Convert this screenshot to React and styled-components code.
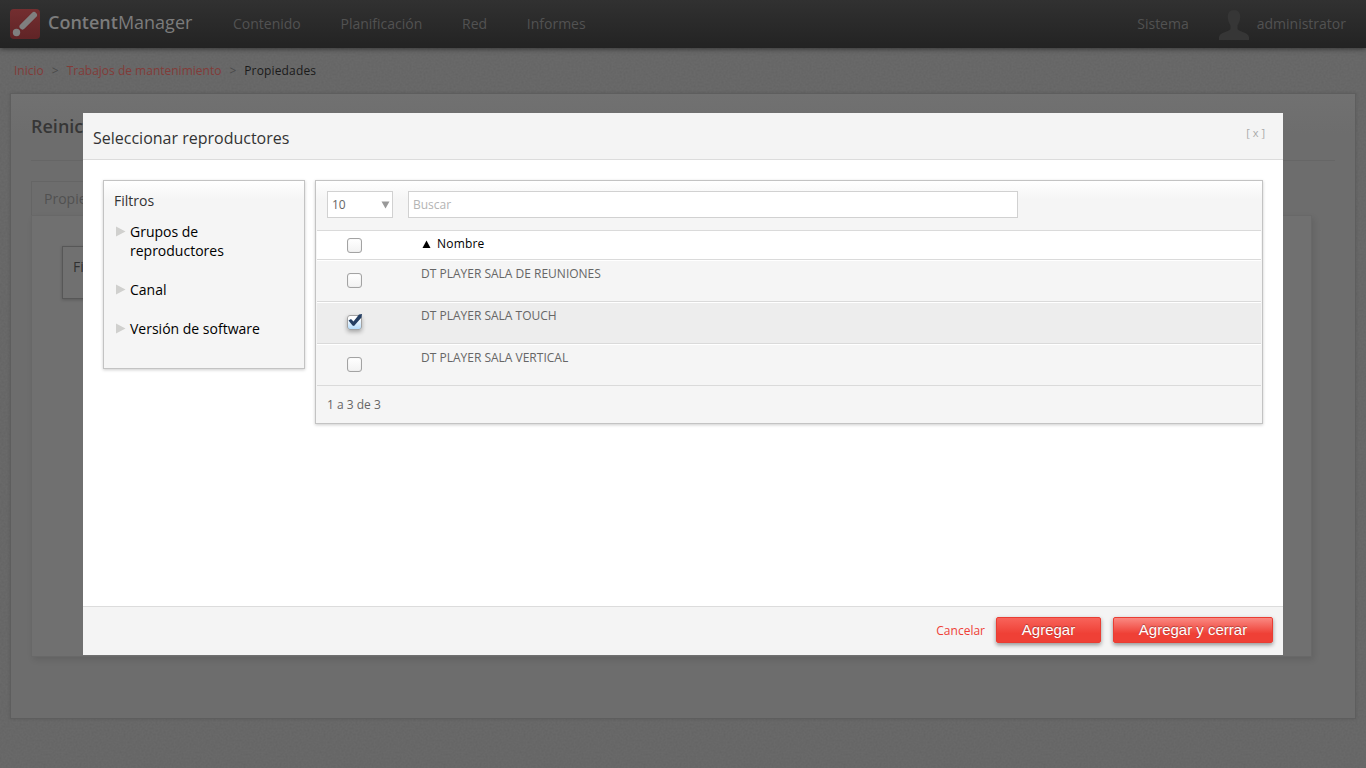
import React, { Component } from 'react';
import styled, { createGlobalStyle } from 'styled-components'

const noise = "data:image/svg+xml,%3Csvg xmlns='http://www.w3.org/2000/svg' width='200' height='200'%3E%3Cfilter id='n'%3E%3CfeTurbulence type='fractalNoise' baseFrequency='.5' numOctaves='2' stitchTiles='stitch'/%3E%3CfeColorMatrix values='0 0 0 0 0 0 0 0 0 0 0 0 0 0 0 .09 0 0 0 -.03'/%3E%3C/filter%3E%3Crect width='200' height='200' filter='url(%23n)'/%3E%3C/svg%3E"

const GlobalStyle = createGlobalStyle`
    * {
        box-sizing: border-box;
    }
    body {
        margin: 0;
        overflow: hidden;
        font-family: "Open Sans", sans-serif;
        font-size: 12px;
        color: #666;
    }
`

const Page = styled.div`
    height: 768px;
    background: #696969 url("${noise}");
`

const Header = styled.header`
    position: relative;
    display: flex;
    align-items: center;
    height: 48px;
    padding: 0 20px 0 10px;
    background: linear-gradient(#313131, #232323);
    box-shadow: 0 1px 5px rgba(0, 0, 0, .5);
`
const Brand = styled.div`
    width: 185px;
    margin: -5px 0 0 8px;
    font-size: 18px;
    line-height: 26px;
    color: #7c7c7c;
    b {
        font-weight: 600;
    }
`
const Nav = styled.nav`
    display: flex;
    flex: 1;
    gap: 39.7px;
`
const NavItem = styled.a`
    font-size: 14px;
    line-height: 20px;
    color: #525252;
`
const UserIcon = styled.svg`
    margin: 2px 8px 0 30px;
`

const Breadcrumb = styled.div`
    display: flex;
    gap: 8px;
    height: 45px;
    padding: 14px 14px 0;
    line-height: 17px;
    color: #4a4a4a;
`
const Crumb = styled.span`
    color: ${props => props.$current ? '#1a1a1a' : '#823b38'};
    letter-spacing: ${props => props.$current ? '.15px' : 'normal'};
`

const Main = styled.main`
    width: 1346px;
    height: 626px;
    margin-left: 10px;
    padding: 0 20px;
    border: 1px solid #5e5e5e;
    background: linear-gradient(#717171, #6d6d6d 40px);
    box-shadow: 0 0 3px rgba(0, 0, 0, .12);
`
const PageTitle = styled.h1`
    height: 67px;
    margin: 0 0 20px;
    padding-top: 20px;
    border-bottom: 1px solid #666;
    font-size: 18px;
    font-weight: 600;
    line-height: 25px;
    color: #363636;
`
const Tab = styled.div`
    width: 120px;
    height: 34px;
    padding: 7px 12px;
    border: 1px solid #656565;
    border-bottom: 0;
    font-size: 14px;
    line-height: 19px;
    color: #515151;
`
const TabContent = styled.div`
    width: 1281px;
    height: 442px;
    padding: 30px;
    border: 1px solid #686868;
    background: #707070;
    box-shadow: 2px 3px 6px rgba(0, 0, 0, .1);
`
const PageFilter = styled.div`
    width: 202px;
    height: 53px;
    padding: 10px;
    border: 1px solid #575757;
    box-shadow: 0 1px 3px rgba(0, 0, 0, .2);
    font-size: 14px;
    line-height: 20px;
    color: #303030;
`

const Overlay = styled.div`
    position: fixed;
    inset: 0;
    display: flex;
    align-items: center;
    justify-content: center;
`
const Modal = styled.section`
    display: flex;
    flex-direction: column;
    width: 1200px;
    height: 542px;
    background: #fff;
`
const ModalHeader = styled.div`
    display: flex;
    justify-content: space-between;
    height: 47px;
    padding: 14px 18px 0 10px;
    border-bottom: 1px solid #dcdcdc;
    background: #f4f4f4;
`
const ModalTitle = styled.h2`
    margin: 0;
    font-size: 16px;
    font-weight: normal;
    line-height: 22px;
    color: #333;
`
const Close = styled.a`
    margin-top: -1px;
    font-size: 11px;
    line-height: 13px;
    color: #aaa;
`
const ModalBody = styled.div`
    display: flex;
    flex: 1;
    align-items: flex-start;
    gap: 10px;
    padding: 20px;
`
const ModalFooter = styled.div`
    display: flex;
    justify-content: flex-end;
    height: 49px;
    padding: 10px 10px 0;
    border-top: 1px solid #dcdcdc;
    background: #f4f4f4;
`
const Cancel = styled.a`
    margin-right: 11px;
    line-height: 28px;
    color: #ef4036;
`
const Button = styled.button`
    width: ${props => props.$width}px;
    height: 26px;
    margin-left: ${props => props.$hover ? 12 : 0}px;
    padding: 0;
    border: 1px solid #e93d33;
    border-radius: 2px;
    background: linear-gradient(${props => props.$hover ? '#fa8982' : '#f8635a'}, #ef4036 65%);
    box-shadow: 0 2px 4px rgba(0, 0, 0, .4);
    font-family: "Liberation Sans", sans-serif;
    font-size: 15px;
    line-height: 24px;
    color: #fff;
    text-shadow: 0 -1px 1px rgba(0, 0, 0, .3);
`

const Panel = styled.div`
    border: 1px solid #c3c3c3;
    background: linear-gradient(#fff, #f5f5f5 18px);
    box-shadow: 0 1px 3px rgba(0, 0, 0, .2);
`
const FilterPanel = styled(Panel)`
    width: 202px;
    height: 189px;
    padding: 10px;
`
const FilterTitle = styled.div`
    margin-bottom: 11px;
    font-size: 14px;
    line-height: 20px;
    color: #333;
`
const FilterItem = styled.div`
    display: flex;
    align-items: flex-start;
    margin-bottom: 20px;
    padding-left: 2px;
    font-size: 14px;
    line-height: 19px;
    color: #000;
    svg {
        flex: none;
        margin: 4px 4px 0 0;
    }
`

const ListPanel = styled(Panel)`
    flex: 1;
    height: 244px;
    padding: 0 1px;
`
const Toolbar = styled.div`
    display: flex;
    gap: 15px;
    height: 49px;
    padding: 10px;
`
const PageSize = styled.div`
    display: flex;
    align-items: center;
    justify-content: space-between;
    width: 66px;
    height: 27px;
    padding: 0 2px 0 4px;
    border: 1px solid #d1d1d1;
    background: #fff;
`
const Search = styled.input`
    width: 610px;
    height: 27px;
    padding: 0 4px;
    border: 1px solid #d1d1d1;
    outline: none;
    font: 12px "Open Sans", sans-serif;
    &::placeholder {
        color: #b4b4b4;
    }
`
const Row = styled.div`
    display: flex;
    height: 42px;
    padding: 4px 0 0 30px;
    border-top: 1px solid #fff;
    border-bottom: 1px solid #dadada;
    background: ${props => props.$selected ? '#ededed' : 'transparent'};
    line-height: 17px;
`
const HeadRow = styled(Row)`
    height: 30px;
    border-top-color: #dadada;
    background: #fff;
    color: #000;
    letter-spacing: .2px;
    svg {
        margin: 0 6px 0 1px;
    }
`
const CheckBox = styled.span`
    width: 15px;
    height: 15px;
    margin: ${props => props.$head ? 3 : 8}px 59px 0 0;
    border: 1px solid #a3a3a3;
    border-radius: 3px;
    background: ${props => props.$checked ? 'linear-gradient(#fff 20%, #b4dbfa)' : 'linear-gradient(#fff, #f2f2f2)'};
    box-shadow: ${props => props.$checked ? '0 2px 4px rgba(0, 0, 0, .3)' : 'inset 0 0 1px #ccc'};
    svg {
        display: block;
        margin: -3px 0 0 -1px;
        overflow: visible;
    }
`
const Summary = styled.div`
    padding: 10px;
    line-height: 17px;
`

const Arrow = () => (
    <svg width="10" height="11"><path d="M0 0.5L9.5 5.5L0 10.5z" fill="#d0d0ce"/></svg>
)

class App extends Component {
    state = {
        filters: ['Grupos de reproductores', 'Canal', 'Versión de software'],
        players: [
            { name: 'DT PLAYER SALA DE REUNIONES', checked: false },
            { name: 'DT PLAYER SALA TOUCH', checked: true },
            { name: 'DT PLAYER SALA VERTICAL', checked: false }
        ]
    }

    toggle = (index) => {
        this.setState({
            players: this.state.players.map((p, i) => i === index ? { ...p, checked: !p.checked } : p)
        })
    }

    render() {
        const { filters, players } = this.state

        return (
            <Page>
                <GlobalStyle/>

                {/* header */}
                <Header>
                    <svg width="30" height="30" viewBox="0 0 30 30">
                        <defs>
                            <linearGradient id="logo" x2="0" y2="1">
                                <stop offset="0" stopColor="#742e30"/>
                                <stop offset="1" stopColor="#602426"/>
                            </linearGradient>
                        </defs>
                        <rect width="30" height="30" rx="4" fill="url(#logo)"/>
                        <path d="M12.5 17.5L24 6" stroke="#7f7f7f" strokeWidth="6" strokeLinecap="round"/>
                        <circle cx="6.5" cy="23.5" r="3.7" fill="#7f7f7f"/>
                    </svg>
                    <Brand><b>Content</b>Manager</Brand>
                    <Nav>
                        <NavItem>Contenido</NavItem>
                        <NavItem>Planificación</NavItem>
                        <NavItem>Red</NavItem>
                        <NavItem>Informes</NavItem>
                    </Nav>
                    <NavItem>Sistema</NavItem>
                    <UserIcon width="30" height="30" viewBox="0 0 30 30">
                        <path d="M15 0C10.500 0 8.500 3 8.800 7.500C9 11 10.500 14 11.500 15.500V19C10 22 1 22 0 27V30H30V27C29 22 20 22 18.500 19V15.500C19.500 14 21 11 21.200 7.500C21.500 3 19.500 0 15 0z" fill="#363636"/>
                    </UserIcon>
                    <NavItem>administrator</NavItem>
                </Header>

                <Breadcrumb>
                    <Crumb>Inicio</Crumb>&gt;
                    <Crumb>Trabajos de mantenimiento</Crumb>&gt;
                    <Crumb $current>Propiedades</Crumb>
                </Breadcrumb>

                <Main>
                    <PageTitle>Reinic</PageTitle>
                    <Tab>Propie</Tab>
                    <TabContent>
                        <PageFilter>Filtros</PageFilter>
                    </TabContent>
                </Main>

                {/* dialog */}
                <Overlay>
                    <Modal>
                        <ModalHeader>
                            <ModalTitle>Seleccionar reproductores</ModalTitle>
                            <Close>[ x ]</Close>
                        </ModalHeader>
                        <ModalBody>
                            <FilterPanel>
                                <FilterTitle>Filtros</FilterTitle>
                                {filters.map(name => (
                                    <FilterItem key={name}><Arrow/><span>{name}</span></FilterItem>
                                ))}
                            </FilterPanel>

                            <ListPanel>
                                <Toolbar>
                                    <PageSize>
                                        10
                                        <svg width="9" height="8"><path d="M0.500 0.500H8.500L4.500 7.500z" fill="#999"/></svg>
                                    </PageSize>
                                    <Search placeholder="Buscar"/>
                                </Toolbar>
                                <HeadRow>
                                    <CheckBox $head/>
                                    <span>
                                        <svg width="9" height="8"><path d="M0.500 8H8.500L4.500 0.500z"/></svg>
                                        Nombre
                                    </span>
                                </HeadRow>
                                {players.map((p, i) => (
                                    <Row key={p.name} $selected={p.checked}>
                                        <CheckBox $checked={p.checked} onClick={() => this.toggle(i)}>
                                            {p.checked && (
                                                <svg width="15" height="14">
                                                    <path d="M1.500 7.500L4 6L6.500 8.500L12 1.500L15 1L14.500 4.500L7 13L5.500 12.500z" fill="#253f63"/>
                                                </svg>
                                            )}
                                        </CheckBox>
                                        <span>{p.name}</span>
                                    </Row>
                                ))}
                                <Summary>1 a {players.length} de {players.length}</Summary>
                            </ListPanel>
                        </ModalBody>
                        <ModalFooter>
                            <Cancel>Cancelar</Cancel>
                            <Button $width={105}>Agregar</Button>
                            <Button $width={160} $hover>Agregar y cerrar</Button>
                        </ModalFooter>
                    </Modal>
                </Overlay>
            </Page>
        )
    }
}

export default App
